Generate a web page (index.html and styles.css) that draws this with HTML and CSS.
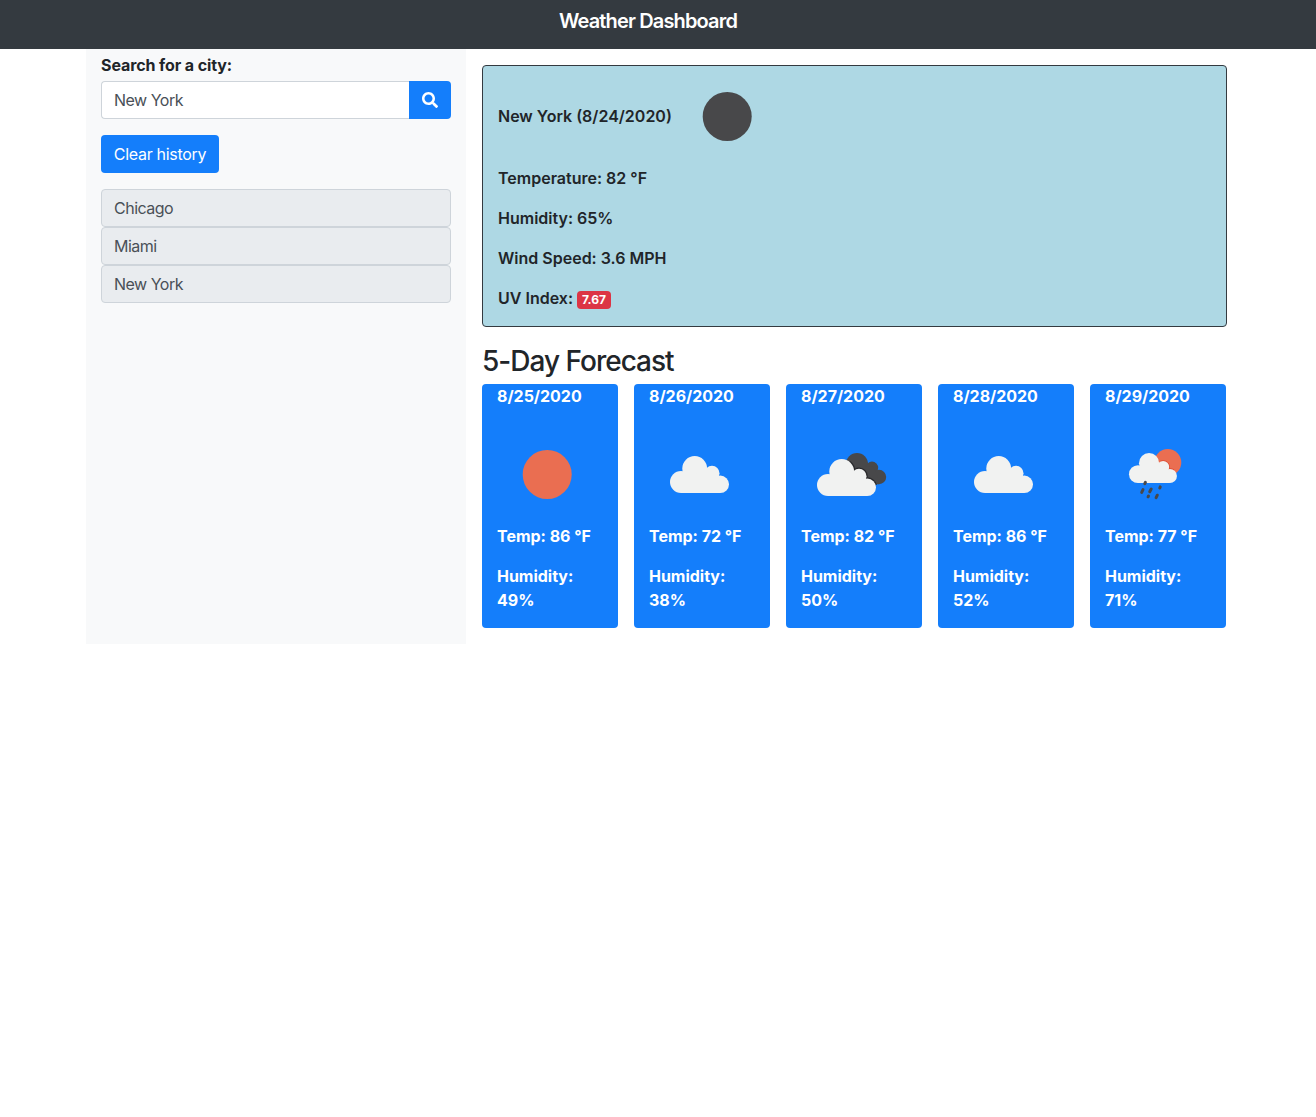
FILE: index.html
```html
<!DOCTYPE html>
<html lang="en">
<head>
<meta charset="utf-8">
<title>Weather Dashboard</title>
<link rel="stylesheet" href="styles.css">
</head>
<body>
<svg class="symbols" aria-hidden="true">
  <symbol id="cloud" viewBox="0 0 100 100">
    <circle cx="32" cy="58" r="11"/>
    <circle cx="45.700" cy="44.500" r="12.400"/>
    <circle cx="63" cy="49.300" r="7.500"/>
    <circle cx="71.300" cy="60.300" r="8.700"/>
    <path d="M32 50h14l16-5 5 10 4.300 14H32z"/>
  </symbol>
  <symbol id="sun" viewBox="0 0 100 100"><circle cx="50.200" cy="50.500" r="24.500"/></symbol>
</svg>

<header class="navbar"><span class="navbar-brand">Weather Dashboard</span></header>

<div class="container">
  <aside class="sidebar">
    <label class="search-label" for="city">Search for a city:</label>
    <div class="search">
      <input class="field search-field" id="city" type="text" value="New York">
      <button class="btn search-btn" aria-label="Search">
        <svg class="search-icon" viewBox="0 0 512 512"><path d="M505 442.7L405.3 343c-4.500-4.500-10.600-7-17-7H372c27.600-35.300 44-79.700 44-128C416 93.100 322.900 0 208 0S0 93.100 0 208s93.100 208 208 208c48.300 0 92.700-16.400 128-44v16.300c0 6.400 2.500 12.500 7 17l99.700 99.700c9.400 9.400 24.600 9.400 33.900 0l28.300-28.300c9.400-9.400 9.400-24.600.1-34zM208 336c-70.700 0-128-57.200-128-128 0-70.700 57.200-128 128-128 70.700 0 128 57.200 128 128 0 70.700-57.200 128-128 128z"/></svg>
      </button>
    </div>
    <button class="btn clear-btn">Clear history</button>
    <div class="history">
      <div class="field history-item">Chicago</div>
      <div class="field history-item">Miami</div>
      <div class="field history-item">New York</div>
    </div>
  </aside>

  <main class="main">
    <section class="current">
      <div class="current-head">
        <span>New York (8/24/2020)</span>
        <svg class="weather-icon night"><use href="#sun"/></svg>
      </div>
      <p>Temperature: 82 °F</p>
      <p>Humidity: 65%</p>
      <p>Wind Speed: 3.6 MPH</p>
      <p>UV Index: <span class="badge">7.67</span></p>
    </section>

    <h3 class="forecast-title">5-Day Forecast</h3>
    <section class="forecast">
      <article class="day">
        <p>8/25/2020</p>
        <svg class="weather-icon clear"><use href="#sun"/></svg>
        <p>Temp: 86 °F</p>
        <p>Humidity: 49%</p>
      </article>
      <article class="day">
        <p>8/26/2020</p>
        <svg class="weather-icon cloudy"><use href="#cloud"/></svg>
        <p>Temp: 72 °F</p>
        <p>Humidity: 38%</p>
      </article>
      <article class="day">
        <p>8/27/2020</p>
        <svg class="weather-icon cloudy" viewBox="0 0 100 100">
          <g class="dark">
            <circle cx="56" cy="40" r="11"/>
            <circle cx="71" cy="43.800" r="6.200"/>
            <circle cx="78" cy="53" r="7.200"/>
            <path d="M50 42h14l8 1 4 7 2 10.200H60z"/>
          </g>
          <g transform="translate(-5 3)">
            <g class="shade">
              <circle cx="45.700" cy="44.500" r="12.400" pathLength="360" stroke-dasharray="50 310" stroke-dashoffset="50"/>
              <circle cx="63" cy="49.300" r="7.500" pathLength="360" stroke-dasharray="130 230" stroke-dashoffset="120"/>
              <circle cx="71.300" cy="60.300" r="8.700" pathLength="360" stroke-dasharray="85 275" stroke-dashoffset="100"/>
            </g>
            <use href="#cloud" width="100" height="100"/>
          </g>
        </svg>
        <p>Temp: 82 °F</p>
        <p>Humidity: 50%</p>
      </article>
      <article class="day">
        <p>8/28/2020</p>
        <svg class="weather-icon cloudy"><use href="#cloud"/></svg>
        <p>Temp: 86 °F</p>
        <p>Humidity: 52%</p>
      </article>
      <article class="day">
        <p>8/29/2020</p>
        <svg class="weather-icon cloudy" viewBox="0 0 100 100">
          <circle class="orange" cx="62.800" cy="38.500" r="13.500"/>
          <g transform="translate(6.900 3) scale(.813)">
            <g class="glow">
              <circle cx="63" cy="49.300" r="7.500" pathLength="360" stroke-dasharray="130 230" stroke-dashoffset="120"/>
              <circle cx="71.300" cy="60.300" r="8.700" pathLength="360" stroke-dasharray="45 315" stroke-dashoffset="100"/>
            </g>
            <use href="#cloud" width="100" height="100"/>
          </g>
          <path class="drops" d="M40.400 58.300l-.6 1.400M38 65.600l-1.300 2.800M46.200 65l-1.500 2.800M55.200 62.900l-.4 1.100M43.500 72l-.4.800M52.300 71.200l-1.200 2.500"/>
        </svg>
        <p>Temp: 77 °F</p>
        <p>Humidity: 71%</p>
      </article>
    </section>
  </main>
</div>
</body>
</html>
```
FILE: styles.css
```css
* { box-sizing: border-box; }

body {
  margin: 0;
  background: #fff;
  color: #212529;
  font: 400 16px/24px Inter, "Liberation Sans", sans-serif;
  letter-spacing: -.3px;
}

p { margin: 0 0 16px; }

.symbols { display: none; }

.navbar {
  display: flex;
  justify-content: center;
  height: 49px;
  padding-top: 6px;
  background: #343a40;
  color: #fff;
}

.navbar-brand {
  margin-right: 20px;
  font-size: 20px;
  font-weight: 600;
  line-height: 30px;
  letter-spacing: -.85px;
}

.container {
  display: flex;
  width: 1141px;
  margin-left: 86px;
}

.sidebar {
  flex: none;
  width: 380px;
  padding: 4px 15px 0;
  background: #f8f9fa;
}

.search-label {
  display: block;
  margin-bottom: 4px;
  font-weight: 700;
  letter-spacing: -.1px;
}

.search {
  display: flex;
  margin-bottom: 16px;
}

.field {
  height: 38px;
  padding: 6px 12px;
  border: 1px solid #ced4da;
  border-radius: 4px;
  background: #fff;
  color: #495057;
  font: inherit;
  letter-spacing: -.5px;
}

.search-field {
  flex: 1;
  min-width: 0;
  border-right: 0;
  border-radius: 4px 0 0 4px;
}

.btn {
  height: 38px;
  padding: 6px 13px;
  border: 0;
  border-radius: 4px;
  background: #147efb;
  color: #fff;
  font: inherit;
  letter-spacing: inherit;
}

.search-btn {
  width: 42px;
  border-radius: 0 4px 4px 0;
}

.search-icon {
  display: block;
  width: 16px;
  height: 16px;
  fill: #fff;
}

.clear-btn {
  display: block;
  width: 118px;
  margin-bottom: 16px;
  padding: 6px 0;
}

.history-item { background: #e9ecef; }

.main {
  flex: 1;
  padding: 16px 0 16px 16px;
}

.current {
  width: 745px;
  height: 262px;
  padding-left: 15px;
  border: 1px solid #343a40;
  border-radius: 4px;
  background: #aed8e4;
  font-weight: 600;
  letter-spacing: 0;
}

.current-head {
  display: flex;
  align-items: center;
}

.current-head span { width: 179px; }

.weather-icon {
  display: block;
  width: 100px;
  height: 100px;
}

.night { fill: #48484a; }
.clear, .orange { fill: #ea6e51; }
.cloudy { fill: #f1f2f1; }
.dark { fill: #48484a; }
.shade { fill: none; stroke: #29292c; stroke-width: 2.500; }
.glow { fill: none; stroke: #dd4b34; stroke-width: 2; }
.drops { fill: none; stroke: #48484a; stroke-width: 3; stroke-linecap: round; }

.badge {
  display: inline-block;
  padding: 3px 5px;
  border-radius: 4px;
  background: #dc3545;
  color: #fff;
  font-size: 12px;
  font-weight: 700;
  line-height: 12px;
  letter-spacing: 0;
}

.forecast-title {
  margin: 18px 0 6px;
  font-size: 28px;
  font-weight: 500;
  line-height: 33px;
  letter-spacing: -1px;
}

.forecast {
  display: grid;
  grid-template-columns: repeat(5, 136px);
  gap: 16px;
}

.day {
  height: 244px;
  padding: 0 15px;
  border-radius: 4px;
  background: #147efb;
  color: #fff;
  font-weight: 700;
  letter-spacing: -.02px;
}
```
